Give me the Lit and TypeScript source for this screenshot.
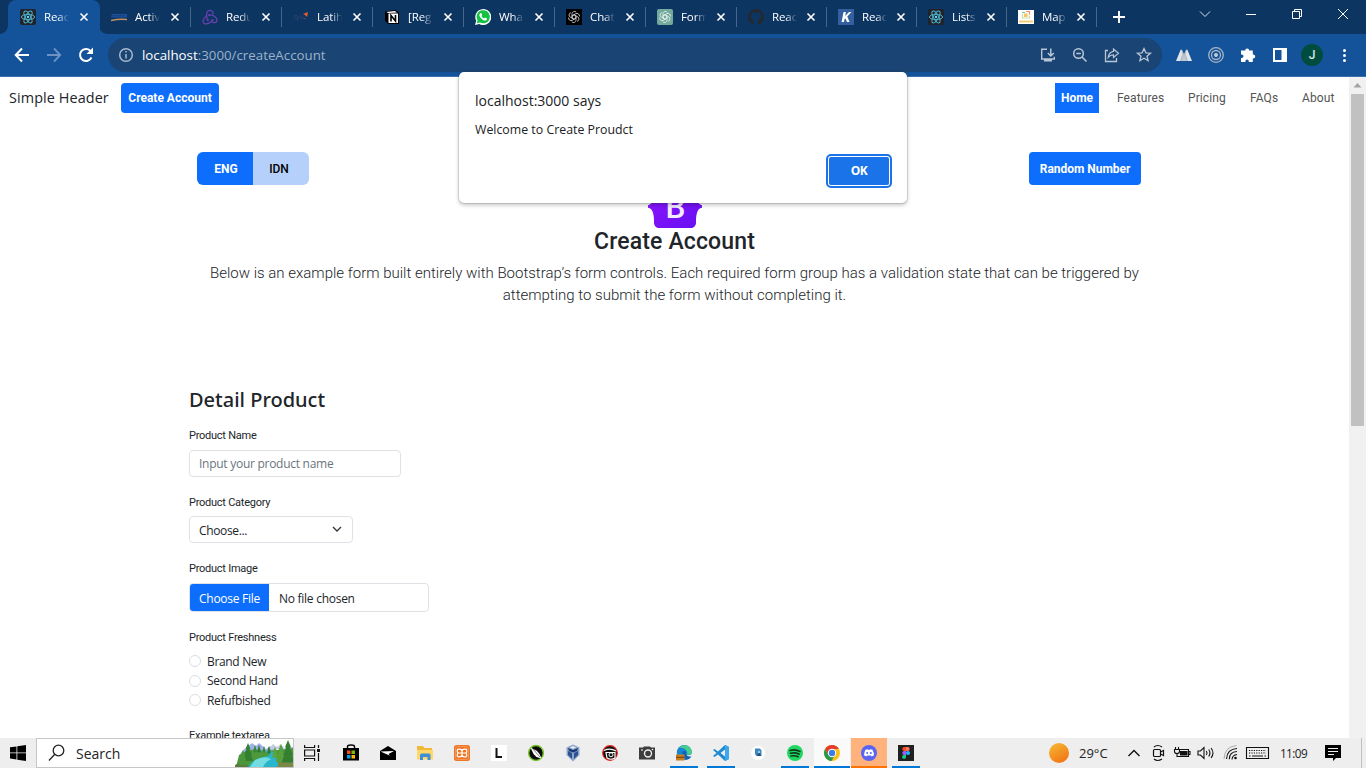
import { LitElement, html, svg, css } from "lit";
import { customElement, property } from "lit/decorators.js";
import { classMap } from "lit/directives/class-map.js";

const reactIcon = svg`<rect width="16" height="16" rx="2" fill="#20232a"/>
  <g fill="none" stroke="#4fb3cc" stroke-width="1"><ellipse cx="8" cy="8" rx="6.6" ry="2.6"/>
  <ellipse cx="8" cy="8" rx="6.6" ry="2.6" transform="rotate(60 8 8)"/><ellipse cx="8" cy="8" rx="6.6" ry="2.6" transform="rotate(120 8 8)"/></g>
  <circle cx="8" cy="8" r="1.2" fill="#61dafb"/>`;

const knot = (c: string) => svg`<g fill="none" stroke=${c} stroke-width=".8">
  ${[0, 60, 120, 180, 240, 300].map((a) => svg`<path d="M8 5.800L10 7V11.200a2.500 2.500 0 0 1-4.200 1.700" transform="rotate(${a} 8 8)"/>`)}</g>`;

const favicons: Record<string, unknown> = {
  react: reactIcon,
  activity: svg`<path d="M1 5h15v3.500H0z" fill="#1c4f9c"/><path d="M1 6.700h13" stroke="#0c3563" stroke-width=".8" stroke-dasharray="1.500 1"/><path d="M0 11.500q8-1.800 16-1" stroke="#c8925c" stroke-width="1.400" fill="none"/>`,
  redux: svg`<g fill="none" stroke="#6a3fb0" stroke-width="1.300"><path d="M5.200 9.500C3.500 5.500 5 1.300 8 1.300c2.300 0 3.400 2 3 4.200"/>
    <path d="M4 7.500C.8 9.500 0 13.500 2.500 14.600c2.700 1 6.500-1 7.700-3.600"/><path d="M7 6C9.500 5.200 15 7.800 15 11.300c0 2.500-3 3-5.500 1.200"/></g>
    <circle cx="5.600" cy="10.800" r="1.200" fill="#6a3fb0"/><circle cx="10.600" cy="11" r="1.100" fill="#6a3fb0"/><circle cx="7.200" cy="6.200" r="1.100" fill="#6a3fb0"/>`,
  latih: svg`<g fill="none" stroke="#28416b" stroke-width="1"><circle cx="3" cy="8" r="1.700"/><path d="M4.700 7v5M7 10V7.500q1-1.500 2 0V10"/></g><path d="M10 5l5-2-1 5-2-2z" fill="#e8602c"/><path d="M10.500 9l2 1" stroke="#7c4a57"/>`,
  notion: svg`<path d="M1 2.500L11.500 1 15 3.500V15H4.500L1 12z" fill="#000"/><path d="M2 3l9-1 2 1.400-8.500.6z" fill="#fff"/><rect x="4.500" y="4.500" width="9.500" height="9.500" fill="#fff"/><path d="M7 12.500V6.500l4.500 5.500V6" stroke="#000" stroke-width="1.600" fill="none"/>`,
  whatsapp: svg`<path d="M0 16l1.200-4.200A8 8 0 1 1 4.300 15z" fill="#fff"/><path d="M1.800 14.200l.8-3A6.600 6.600 0 1 1 5 13.500z" fill="#14c143"/><path d="M5.200 4.200l1-.2 1 2-.7 1c.7 1.400 1.400 2 2.600 2.500l.9-1 2 1c0 1.500-1 2.200-2.200 2.100C7 11.200 4 7.500 4.300 5.600z" fill="#fff"/>`,
  chat: svg`<rect width="16" height="16" fill="#000"/>${knot("#d5d5d5")}`,
  form: svg`<rect width="16" height="16" rx="2" fill="#74aa9c"/>${knot("#e6f3ef")}`,
  github: svg`<path d="M8 0a8 8 0 0 0-2.500 15.600c.4 0 .5-.2.500-.4v-1.600c-2.200.5-2.700-1-2.700-1-.4-.9-.9-1.200-.9-1.200-.7-.5 0-.5 0-.5.800.1 1.200.8 1.200.8.700 1.300 1.900.9 2.400.7 0-.5.300-.9.500-1.100-1.800-.2-3.600-.9-3.600-4 0-.8.300-1.600.8-2.100-.1-.2-.4-1 .1-2.100 0 0 .7-.2 2.200.8a7.600 7.600 0 0 1 4 0c1.500-1 2.200-.8 2.200-.8.400 1.100.2 1.900.1 2.100.5.500.8 1.300.8 2.100 0 3.100-1.900 3.700-3.700 3.900.3.300.6.800.6 1.500v2.500c0 .2.100.5.500.4A8 8 0 0 0 8 0z" fill="#24292f"/>`,
  k: svg`<rect width="16" height="16" fill="#34609f"/><path d="M5.500 3h2.400L7.200 7 11 3h2.500L9.300 7.400 11.500 13H9L7.400 9.200 6.500 10.200 6 13H3.600z" fill="#fff"/>`,
  map: svg`<rect y="1" width="16" height="14" fill="#fff"/><g fill="none" stroke-width="1.200"><path d="M4 3.500h3" stroke="#7bc8a0"/><path d="M8 2.500h3.500v3" stroke="#ee8d73"/><path d="M4.500 5v4h7V6.500" stroke="#c7dfa6"/></g><rect x="6" y="4.500" width="3.500" height="3.500" fill="#f7c660"/><path d="M1 12.500h14" stroke="#f3cd74" stroke-width="2"/>`,
};

const tabs = [
  ["react", "Reac"], ["activity", "Activ"], ["redux", "Redu"], ["latih", "Latih"],
  ["notion", "[Reg"], ["whatsapp", "Wha"], ["chat", "Chat"], ["form", "Form"],
  ["github", "Reac"], ["k", "Reac"], ["react", "Lists"], ["map", "Map"],
];

@customElement("chrome-tab")
class ChromeTab extends LitElement {
  @property() icon = "";
  @property() label = "";
  @property({ type: Boolean }) active = false;
  static styles = css`
    :host { display: block; height: 34px; color: #fff; }
    .tab { display: flex; align-items: center; height: 34px; box-sizing: border-box; padding-left: 11px; border-right: 1px solid transparent; position: relative; }
    .tab::after { content: ""; position: absolute; right: -1px; top: 7px; width: 1px; height: 20px; background: #48668a; }
    .tab.active { background: #14529a; border-radius: 8px 8px 0 0; margin-left: -1px; padding-left: 12px; }
    .tab.active::after { display: none; }
    .tab.active::before { content: ""; position: absolute; left: -8px; right: -8px; bottom: 0; height: 8px;
      background: radial-gradient(circle at 0 0, transparent 7.5px, #14529a 8px) left / 8px 8px no-repeat, radial-gradient(circle at 100% 0, transparent 7.5px, #14529a 8px) right / 8px 8px no-repeat; }
    .icon { flex: none; }
    .label { margin-left: 8px; width: 25px; flex: none; white-space: nowrap; font: 11.500px/18px "Open Sans", sans-serif; letter-spacing: -0.1px;
      -webkit-mask-image: linear-gradient(90deg, #000 55%, transparent); mask-image: linear-gradient(90deg, #000 55%, transparent); }
    .close { margin-left: 10px; flex: none; }
    :host(.narrow) .close { margin-left: 9px; }
  `;
  render() {
    return html`<div class=${classMap({ tab: true, active: this.active })}>
      <svg class="icon" width="16" height="16" viewBox="0 0 16 16">${favicons[this.icon]}</svg>
      <span class="label">${this.label}</span>
      <svg class="close" width="10" height="10" viewBox="0 0 10 10"><path d="M1.500 1.500l7 7M8.500 1.500l-7 7" stroke="#fff" stroke-width="1.600"/></svg>
    </div>`;
  }
}

const ico = (body: unknown) => html`<span class="cell"><svg width="20" height="20" viewBox="0 0 20 20" fill="none">${body}</svg></span>`;

@customElement("chrome-frame")
class ChromeFrame extends LitElement {
  static styles = css`
    :host { display: block; height: 77px; font-family: "Open Sans", sans-serif; }
    .strip { display: flex; height: 34px; background: #0d3562; padding-left: 9px; }
    .wide { width: 91px; }
    .narrow { width: 90px; }
    .plus { width: 44px; height: 34px; display: grid; place-items: center; }
    .win { display: flex; margin-left: auto; margin-top: -3px; }
    .win svg { width: 46px; height: 34px; }
    .bar { display: flex; align-items: center; height: 43px; box-sizing: border-box; background: #14529a; border-bottom: 1px solid #3a70b2; padding-left: 6px; }
    .cell { width: 32px; height: 34px; display: grid; place-items: center; flex: none; }
    .omni { margin: 0 6px; width: 1054px; height: 34px; border-radius: 17px; background: #194473; display: flex; align-items: center; box-sizing: border-box; padding: 0 2px; flex: none; }
    .url { font-size: 13.300px; color: #9db3ca; flex: 1; white-space: nowrap; }
    .host { color: #fff; }
    .avatar { width: 22px; height: 22px; border-radius: 50%; background: #004d40; color: #d9e5e2; font: 500 12px/22px Roboto, sans-serif; text-align: center; }
  `;
  render() {
    return html`
      <div class="strip">
        ${tabs.map(([i, l], n) => html`<chrome-tab class=${n < 8 ? "wide" : "narrow"} .icon=${i} .label=${l} .active=${n === 0}></chrome-tab>`)}
        <div class="plus"><svg width="12" height="12"><path d="M6 0v12M0 6h12" stroke="#fff" stroke-width="1.900"/></svg></div>
        <div class="win">
          <svg viewBox="0 0 46 34" fill="none" stroke="#d8e0ea"><path d="M18 14.500l5 5 5-5"/></svg>
          <svg viewBox="0 0 46 34" stroke="#fff"><path d="M18 17.500h10"/></svg>
          <svg viewBox="0 0 46 34" fill="none" stroke="#fff"><path d="M18.500 14.500h7v7h-7zM20.500 14.500v-2h7v7h-2"/></svg>
          <svg viewBox="0 0 46 34" stroke="#fff"><path d="M18 12l10 10M28 12l-10 10"/></svg>
        </div>
      </div>
      <div class="bar">
        ${ico(svg`<path d="M17 10H4M10 3.500L3.700 10l6.300 6.500" stroke="#fff" stroke-width="2"/>`)}
        ${ico(svg`<path d="M3 10h13M10 3.500l6.300 6.500-6.300 6.500" stroke="#6c93c2" stroke-width="1.800"/>`)}
        ${ico(svg`<path d="M15.500 12.500a6 6 0 1 1-1.200-6.800" stroke="#fff" stroke-width="2"/><path d="M17 2.500v6.500h-6.500z" fill="#fff"/>`)}
        <div class="omni">
          ${ico(svg`<circle cx="10" cy="10" r="6.300" stroke="#a9b9cb" stroke-width="1.500"/><path d="M10 9v4.500M10 6v1.600" stroke="#a9b9cb" stroke-width="1.500"/>`)}
          <span class="url"><span class="host">localhost</span>:3000/createAccount</span>
          ${ico(svg`<path d="M9 4.200H3.700V14h12.600v-2.300" stroke="#b9c6d5" stroke-width="1.400"/><path d="M6 14h8v2.500H6z" fill="#b9c6d5"/><path d="M12.800 3.500v7M9.800 8l3 3 3-3" stroke="#b9c6d5" stroke-width="1.500"/>`)}
          ${ico(svg`<circle cx="8.500" cy="8.500" r="4.800" stroke="#b9c6d5" stroke-width="1.500"/><path d="M12 12l4.500 4.500M6.300 8.500h4.500" stroke="#b9c6d5" stroke-width="1.500"/>`)}
          ${ico(svg`<path d="M6 5.500H3.500v11h11V13" stroke="#b9c6d5" stroke-width="1.300"/><path d="M11.500 4l5 4.200-5 4.200v-2.500c-2.500 0-4 .8-5.300 2.500.4-3 2-5.500 5.300-6z" stroke="#b9c6d5" stroke-width="1.200"/>`)}
          ${ico(svg`<path d="M10 3.600l1.900 4.200 4.600.4-3.500 3 1.100 4.500-4.100-2.400-4.100 2.400L7 11.200l-3.500-3 4.600-.4z" stroke="#b9c6d5" stroke-width="1.300"/>`)}
        </div>
        ${ico(svg`<path d="M2 16L6.500 5Q7.200 4 8 5L10 9.500 7 16z" fill="#e2e6ea"/><path d="M18 16L13.500 5Q12.800 4 12 5L10 9.500l3 6.500z" fill="#e2e6ea"/><path d="M7 16l3-8 3 8z" fill="#c2cad3"/><path d="M7.300 4.500L10 9.500 7.500 16H6l2.200-6.500zM12.700 4.500L10 9.500l2.500 6.500H14l-2.200-6.500z" fill="#b3bdc9"/>`)}
        ${ico(svg`<circle cx="10" cy="10" r="7.300" stroke="#aab7c6" stroke-width="1.300"/><circle cx="10" cy="10" r="4.500" stroke="#aab7c6" stroke-width="1.300"/><circle cx="10" cy="10" r="2" fill="#c3cdd8"/>`)}
        ${ico(svg`<path d="M3 5.500h4.200a2 2 0 1 1 4 0h3.600v4h.4a2 2 0 1 1 0 4h-.4v3.500h-4v-.7a1.700 1.700 0 0 0-3.400 0v.7H3v-4h.7a1.800 1.800 0 0 0 0-3.600H3z" fill="#fff"/>`)}
        ${ico(svg`<path d="M4 4h12v12H4z" stroke="#fff" stroke-width="2"/><path d="M11.500 3H17v14h-5.500z" fill="#fff"/>`)}
        <span class="cell"><span class="avatar">J</span></span>
        ${ico(svg`<g fill="#fff"><circle cx="10.500" cy="5.500" r="1.500"/><circle cx="10.500" cy="10.500" r="1.500"/><circle cx="10.500" cy="15.500" r="1.500"/></g>`)}
      </div>`;
  }
}

@customElement("account-page")
class AccountPage extends LitElement {
  static styles = css`
    :host { display: flex; height: 661px; background: #fff; color: #212529; overflow: hidden; font-family: "Open Sans", sans-serif; }
    .content { width: 1349px; height: 661px; }
    .header { display: flex; align-items: center; padding: 6px 9px 0; height: 30px; font: 12px/30px Roboto, sans-serif; color: #555; }
    .brand { font: 14.400px/30px "Open Sans", sans-serif; color: #212529; width: 112px; white-space: nowrap; letter-spacing: 0.1px; }
    .btn { background: #0d6efd; color: #fff; border-radius: 4px; text-align: center; font: 700 12px/30px Roboto, sans-serif; white-space: nowrap; }
    .create { width: 98px; }
    .nav { display: flex; margin-left: auto; padding-right: 5px; letter-spacing: 0.1px; }
    .home { background: #0d6efd; color: #fff; font-weight: 700; width: 44px; text-align: center; margin-right: 18px; letter-spacing: 0; }
    .features { width: 71px; }
    .pricing { width: 62px; }
    .faqs { width: 52px; }
    .about { width: 33px; }
    .tools { display: flex; justify-content: space-between; padding: 39px 208px 0 197px; height: 33px; }
    .lang { display: flex; font: 500 12px/34px Roboto, sans-serif; height: 33px; }
    .eng { width: 56px; padding-left: 2px; box-sizing: border-box; text-align: center; background: #0d6efd; color: #fff; border-radius: 6px 0 0 6px; font-weight: 700; }
    .idn { width: 56px; padding-right: 4px; box-sizing: border-box; text-align: center; background: #b6d0fc; color: #000; border-radius: 0 6px 6px 0; }
    .random { width: 112px; height: 33px; line-height: 34px; letter-spacing: -0.03px; }
    .intro { text-align: center; height: 203px; }
    .logo { display: block; margin: 0 auto; }
    .title { margin: 0; font: 500 23px/28px Roboto, sans-serif; letter-spacing: 0.15px; }
    .lead { margin: 6px auto 0; width: 960px; font: 300 15px/22px Roboto, sans-serif; letter-spacing: 0; }
    .form { padding-left: 189px; }
    .section { margin: 0 0 17px; font: 500 20px/24px "Noto Sans", sans-serif; }
    .label { font: 11px/14px Roboto, sans-serif; letter-spacing: -0.25px; white-space: nowrap; }
    .box { box-sizing: border-box; border: 1px solid #dee2e6; border-radius: 4px; font: 12px/25px "Open Sans", sans-serif; letter-spacing: -0.27px; background: #fff; color: #212529; }
    .name { display: block; width: 212px; height: 27px; padding: 0 9px; margin: 7px 0 19px; outline: none; }
    .name::placeholder { color: #6c757d; opacity: 1; }
    .select { display: flex; align-items: center; justify-content: space-between; width: 164px; height: 27px; padding: 2px 10px 0 9px; margin: 6px 0 19px; letter-spacing: -0.35px; }
    .chev { margin-top: -4px; }
    .file { display: flex; width: 240px; height: 29px; margin: 7px 0 19px; line-height: 29px; overflow: hidden; }
    .choose { background: #0d6efd; color: #fff; width: 79px; text-align: center; margin-right: 10px; }
    .radios { margin-top: 6.500px; height: 77.500px; }
    .radio { display: flex; align-items: center; height: 19.500px; font: 12px/19px "Open Sans", sans-serif; letter-spacing: -0.33px; }
    .dot { width: 12px; height: 12px; box-sizing: border-box; border: 1px solid #d9dde2; border-radius: 50%; margin-right: 6px; }
    .bar { width: 17px; background: #f1f1f1; display: flex; flex-direction: column; align-items: center; }
    .thumb { width: 13px; height: 332px; background: #c1c1c1; }
  `;
  render() {
    return html`
      <div class="content">
        <div class="header">
          <span class="brand">Simple Header</span><span class="btn create">Create Account</span>
          <nav class="nav"><span class="home">Home</span><span class="features">Features</span><span class="pricing">Pricing</span><span class="faqs">FAQs</span><span class="about">About</span></nav>
        </div>
        <div class="tools">
          <div class="lang"><span class="eng">ENG</span><span class="idn">IDN</span></div>
          <span class="btn random">Random Number</span>
        </div>
        <div class="intro">
          <svg class="logo" width="54" height="43" viewBox="0 0 118 94"><defs><linearGradient id="g" x1="0" y1="0" x2="1" y2="1"><stop stop-color="#9013fe"/><stop offset="1" stop-color="#6610f2"/></linearGradient></defs>
            <path fill="url(#g)" d="M24.509 0c-6.733 0-11.715 5.893-11.492 12.284.214 6.140-.064 14.092-2.066 20.577C8.943 39.365 5.547 43.485 0 44.014v5.972c5.547.529 8.943 4.649 10.951 11.153 2.002 6.485 2.280 14.437 2.066 20.577C12.794 88.106 17.776 94 24.510 94H93.500c6.733 0 11.714-5.893 11.491-12.284-.214-6.140.064-14.092 2.066-20.577 2.009-6.504 5.396-10.624 10.943-11.153v-5.972c-5.547-.529-8.934-4.649-10.943-11.153-2.002-6.484-2.280-14.437-2.066-20.577C105.214 5.894 100.233 0 93.500 0z"/>
            <text x="60" y="72" text-anchor="middle" font-family="Roboto" font-weight="500" font-size="69" fill="#f4ecff">B</text></svg>
          <h1 class="title">Create Account</h1>
          <p class="lead">Below is an example form built entirely with Bootstrap’s form controls. Each required form group has a validation state that can be triggered by attempting to submit the form without completing it.</p>
        </div>
        <div class="form">
          <h2 class="section">Detail Product</h2>
          <div class="label">Product Name</div>
          <input class="box name" placeholder="Input your product name" />
          <div class="label">Product Category</div>
          <div class="box select"><span>Choose...</span><svg class="chev" width="10" height="8" viewBox="0 0 10 8"><path d="M1 2l4 4 4-4" fill="none" stroke="#343a40" stroke-width="1.400"/></svg></div>
          <div class="label">Product Image</div>
          <div class="box file"><span class="choose">Choose File</span><span>No file chosen</span></div>
          <div class="label">Product Freshness</div>
          <div class="radios">${["Brand New", "Second Hand", "Refufbished"].map((t) => html`<div class="radio"><span class="dot"></span>${t}</div>`)}</div>
          <div class="label">Example textarea</div>
        </div>
      </div>
      <div class="bar"><svg width="17" height="17"><path d="M4.500 10.500h8L8.500 6z" fill="#a3a3a3"/></svg><div class="thumb"></div></div>`;
  }
}

@customElement("alert-dialog")
class AlertDialog extends LitElement {
  static styles = css`
    :host { display: flex; flex-direction: column; box-sizing: border-box; width: 448px; height: 131px; padding: 19px 16px 0; background: #fff; border-radius: 5px; box-shadow: 0 0 0 1px rgba(60, 64, 67, 0.14), 0 2px 4px rgba(0, 0, 0, 0.25); color: #202124; font-family: "Open Sans", sans-serif; }
    .origin { font-size: 14px; line-height: 20px; }
    .message { font-size: 12.350px; line-height: 18px; margin-top: 10px; }
    .ok { align-self: flex-end; margin-top: 17px; width: 60px; height: 28px; border-radius: 3px; background: #1a73e8; color: #fff; font: 700 12px/28px "Open Sans", sans-serif; letter-spacing: -0.4px; text-align: center; border: 1px solid #fff; outline: 2px solid #1a73e8; margin-right: 1px; }
  `;
  render() {
    return html`<div class="origin">localhost:3000 says</div><div class="message">Welcome to Create Proudct</div><div class="ok">OK</div>`;
  }
}

const tree = (x: number, y: number, s: number, c: string) => svg`<path d="M${x} ${y}l${2.5 * s} ${6 * s}h-${1 * s}l${2.5 * s} ${6 * s}h-${1 * s}l${2 * s} ${6 * s}h-${10 * s}l${2 * s}-${6 * s}h-${1 * s}l${2.5 * s}-${6 * s}h-${1 * s}z" fill=${c}/>`;

const apps: { s: string; b: unknown }[] = [
  { s: "", b: svg`<path d="M2 5h16v12.500H2z" fill="#000"/><path d="M6.500 6V3.500q0-1.500 3.500-1.500t3.500 1.500V6" fill="none" stroke="#000" stroke-width="1.400"/><path d="M6 7.500h3.500v3.500H6z" fill="#f25022"/><path d="M10.500 7.500H14v3.500h-3.500z" fill="#7fba00"/><path d="M6 12h3.500v3.500H6z" fill="#00a4ef"/><path d="M10.500 12H14v3.500h-3.500z" fill="#ffb900"/>` },
  { s: "", b: svg`<path d="M2 8l8-5 8 5v9H2z" fill="#000"/><path d="M2.500 8.500l13.500-.5-5.500 3 1.500 1.800z" fill="#fff"/>` },
  { s: "", b: svg`<path d="M2 3h6l1.500 2H17v11H2z" fill="#f0b93a"/><path d="M2 7h16v9.500H2z" fill="#ffd768"/><path d="M5 17v-5q0-1.500 1.500-1.500h7.500q1.500 0 1.500 1.500v5h-3v-3H8v3z" fill="#3d8fd8"/>` },
  { s: "", b: svg`<rect x="2" y="2" width="16" height="16" rx="2.500" fill="#ee7526"/><rect x="3.500" y="3.500" width="13" height="13" rx="2" fill="none" stroke="#f9a566" stroke-width=".7"/><path d="M6 6.200h1.500q2.500 0 2.500 2.300v3q0 2.300 2.500 2.300H14q.8 0 .8-1.800T13.300 10H6.700Q5.200 10 5.200 8.200T6 6.200zM14 6.200h-1.500Q10 6.200 10 8.500v3q0 2.300-2.500 2.300H6q-.8 0-.8-1.800T6.700 10h6.600q1.500 0 1.500-1.800T14 6.200z" fill="none" stroke="#fff" stroke-width="1.200"/>` },
  { s: "", b: svg`<path d="M2 2h16v16H2z" fill="#fff"/><path d="M7.500 5v9h5.500" fill="none" stroke="#111" stroke-width="2"/>` },
  { s: "", b: svg`<circle cx="10" cy="10" r="7.400" fill="#0a0a0a" stroke="#79c52e" stroke-width="1.500"/><path d="M4.500 4.500l6.500 3.500 2.500 3 2 4.500-5-1.500-3-3z" fill="#fff"/><path d="M6.500 5.500l7.500 8.500" stroke="#333" stroke-width=".6"/>` },
  { s: "", b: svg`<path d="M10 1.500l6.500 3v7.500L10 18.500 3.500 12V4.500z" fill="#8fa5c8"/><path d="M5 5l5 2 5-2-1 3-4 1.500L6 8z" fill="#163a75"/><path d="M5 8l4 2v6l-4-4zM15 8l-4 2v6l4-4z" fill="#2b5394"/><path d="M7 4.500l3-1.500 3 1.500-3 1.300z" fill="#e7eef8"/>` },
  { s: "", b: svg`<circle cx="10" cy="10" r="7.300" fill="#111" stroke="#e2231a" stroke-width="1.200"/><path d="M4 7.500q6-3 12 .5M6 9.500h9v5.500q-4 2.500-8 0z" fill="none" stroke="#fff" stroke-width="1.200"/><circle cx="11" cy="11.800" r="2" fill="none" stroke="#fff"/>` },
  { s: "", b: svg`<path d="M2 4.500h4l1-1h6l1 1h4v12H2z" fill="#3d3d3d"/><circle cx="11" cy="10.500" r="3.500" fill="#3d3d3d" stroke="#eee" stroke-width="1.400"/><path d="M4 7h2" stroke="#fff"/><circle cx="15.500" cy="6.500" r=".8" fill="#fff"/>` },
  { s: "run", b: svg`<circle cx="10.300" cy="9.500" r="7.500" fill="#1785d6"/><path d="M5 4.500Q9 1 13.500 2.700 18 5 17.800 10q-.8 2.500-4.800 1.500 1-4-3-6Q7.500 4.500 5 4.500z" fill="#45cf8a"/><path d="M12 11.500q3.500 1.500 6-.5v3l-5 1z" fill="#eee"/><path d="M8 9q3-2 4 0 0 3 1 3.500 2 1.500 4.500.7-2 3.500-6 3.500z" fill="#0f62b5"/><path d="M2 11.500h8.500V17.500H2z" fill="#c77d22"/><path d="M2 14.300h8.500" stroke="#6d3b0d"/>` },
  { s: "run", b: svg`<path d="M14 2l4 2v12l-4 2-7-6.500L3.500 14 2 13l3.500-3L2 7l1.500-1L7 8.500zM14 6.500L9.500 10l4.500 3.500z" fill="#1f8ad2"/><path d="M14 2l4 2v12l-4 2z" fill="#3aa8ee"/>` },
  { s: "", b: svg`<circle cx="10" cy="10" r="7" fill="#fff"/><path d="M7 5.500h5l1.500 2V13H8.500L7 11z" fill="#3f86bd"/><path d="M9 13l2-5 2 5z" fill="#244f78"/><circle cx="11" cy="9" r="1.200" fill="#8fd0e5"/>` },
  { s: "run", b: svg`<circle cx="10" cy="10" r="8" fill="#1ed760"/><path d="M5 7.500q5.500-1.600 10 1M5.500 10.300q4.800-1.200 8.700.9M6 13q4-.9 7.200.7" fill="none" stroke="#10381e" stroke-width="1.600" stroke-linecap="round"/>` },
  { s: "wide", b: svg`<circle cx="10" cy="10" r="8" fill="#fbc116"/><path d="M3.100 6A8 8 0 0 1 16.900 6H10l-3.500 6z" fill="#e33b2e"/><path d="M3.100 6A8 8 0 0 0 9.500 18l3.500-6-6.500 0z" fill="#279847"/><circle cx="10" cy="10" r="4.200" fill="#fff"/><circle cx="10" cy="10" r="3.200" fill="#3d7de8"/>` },
  { s: "wide orange", b: svg`<circle cx="10" cy="10" r="8" fill="#5865f2"/><path d="M6.500 6.700l2-.5.500.6h2l.5-.6 2 .5q1.500 3 1.500 5.600l-2.300 1.200-.8-1.100H8.100l-.8 1.100L5 12.300q0-3 1.500-5.600z" fill="#fff"/><circle cx="8.200" cy="10" r="1" fill="#5865f2"/><circle cx="11.800" cy="10" r="1" fill="#5865f2"/>` },
  { s: "run", b: svg`<path d="M2 2h16v16H2z" fill="#202020"/><path d="M10 4H8.300a2 2 0 0 0 0 4H10z" fill="#f24e1e"/><path d="M10 4h1.700a2 2 0 0 1 0 4H10z" fill="#ff7262"/><path d="M10 8H8.300a2 2 0 0 0 0 4H10z" fill="#a259ff"/><circle cx="12" cy="10" r="2" fill="#1abcfe"/><path d="M10 12H8.300A2 2 0 1 0 10 14z" fill="#0acf83"/>` },
];

@customElement("task-bar")
class TaskBar extends LitElement {
  static styles = css`
    :host { display: flex; height: 30px; background: #eeeeee; color: #222; font-family: "Open Sans", sans-serif; position: relative; }
    .start { width: 36px; display: grid; place-items: center; }
    .search { width: 258px; height: 30px; box-sizing: border-box; border: 1px solid #c6c6c6; background: #fff; display: flex; align-items: center; padding-left: 11px; font-size: 14px; }
    .search span { margin-left: 11px; flex: 1; }
    .tv { width: 39px; height: 30px; padding-left: 9px; box-sizing: border-box; display: flex; align-items: center; }
    .app { width: 36px; margin-right: 1px; height: 30px; display: flex; flex-direction: column; align-items: center; justify-content: space-between; padding-top: 5px; box-sizing: border-box; }
    .line { width: 28px; height: 2px; }
    .run .line { background: #0078d7; }
    .wide { background: #fafafa; }
    .wide .line { width: 36px; background: #0078d7; }
    .orange { background: #ffb27c; }
    .orange .line { background: #ff7300; }
    .tray { margin-left: auto; display: flex; align-items: center; }
    .sun { width: 20px; height: 20px; border-radius: 50%; background: linear-gradient(150deg, #f5bd35, #f26a10); margin-right: 10px; }
    .temp { font-size: 13px; width: 43px; }
    .t { width: 24px; height: 20px; }
    .kb { width: 31px; }
    .time { width: 41px; text-align: center; font-size: 11.800px; line-height: 18px; padding-bottom: 1px; letter-spacing: -0.6px; }
    .note { width: 38px; height: 20px; }
    .edge { width: 1px; height: 30px; margin: 0 4px 0 9px; background: #c0c0c0; }
  `;
  render() {
    const k = "#111";
    return html`
      <span class="start"><svg width="16" height="16" fill="#000"><path d="M0 2.300l6.500-.9v6.100H0zM7.300 1.300L16 0v7.500H7.300zM0 8.300h6.500v6.100L0 13.500zM7.300 8.300H16V16l-8.700-1.300z"/></svg></span>
      <div class="search"><svg width="17" height="18" fill="none" stroke="#222" stroke-width="1.300"><circle cx="10.500" cy="6.500" r="5.300"/><path d="M6.800 10.300L1 16.500"/></svg><span>Search</span>
        <svg width="58" height="28" viewBox="0 0 58 28"><path d="M7 12L17 4l4 3 3-3 7 6 5-3 6 4 16-3v12H4z" fill="#9db1ea"/><path d="M34 10l4-5 4 3 4-3 4 5z" fill="#c3cbe0"/><path d="M4 16q10-7 20-5t34-2v19H1z" fill="#4c9a3d"/><path d="M24 12q16 2 9 5-16 3-20 11h30q6-7-4-10 5-4-5-6z" fill="#27b6cd"/><path d="M20 21q10-5 16-1-6 3-8 8H15z" fill="#72dce0"/><path d="M40 20q10 0 18 3v5H42q3-5-2-8z" fill="#7a8a45"/><path d="M0 26l8-4 6 6H0z" fill="#5b7b3b"/>
          ${tree(20, 6, 0.4, "#3a8636")}${tree(24, 6, 0.4, "#2f7a2d")}${tree(29, 7, 0.35, "#3a8636")}${tree(34, 7, 0.4, "#2f7a2d")}${tree(13, 4, 1, "#347f31")}${tree(8, 11, 0.85, "#4a9638")}${tree(40, 8, 0.6, "#5da43d")}${tree(46, 5, 1, "#57a03b")}${tree(53, 1, 1.250, "#357f31")}</svg></div>
      <span class="tv"><svg width="18" height="16" fill="none" stroke="#111" stroke-width="1.200"><path d="M1.600 0v2.500h10V0M1.600 5h10v6h-10zM1.600 16v-2.500h10V16M15.500 0v3M15.500 8v8"/><path d="M14 4h3v3h-3z" fill="#111" stroke="none"/></svg></span>
      ${apps.map((a) => html`<span class="app ${a.s}"><svg width="20" height="20" viewBox="0 0 20 20">${a.b}</svg><span class="line"></span></span>`)}
      <div class="tray">
        <span class="sun"></span><span class="temp">29°C</span>
        <svg class="t" viewBox="0 0 24 20" fill="none" stroke=${k} stroke-width="1.400"><path d="M6.500 13l5.500-5.500 5.500 5.500"/></svg>
        <svg class="t" viewBox="0 0 24 20" fill="none" stroke=${k} stroke-width="1.200"><rect x="7.500" y="6.500" width="7" height="7" rx="1"/><path d="M14.500 9l3-1.500v5l-3-1.500M8 4q3.500-3 8 0M8 16q3.500 3 8 0"/></svg>
        <svg class="t" viewBox="0 0 24 20" fill="none" stroke=${k} stroke-width="1.100"><path d="M9 6.500h9.500v7H8M18.500 8.500h1.500v3h-1.500"/><path d="M10.500 8.500h6.500v3.500h-6.500z" fill=${k}/><path d="M5.500 4v3M8.500 4v3M4.500 6.500h5v2q0 2-2.500 2t-2.500-2zM7 10.500v3h2"/></svg>
        <svg class="t" viewBox="0 0 24 20" fill="none" stroke=${k} stroke-width="1.100"><path d="M4 8h2.500L10 4.500v11L6.500 12H4zM12.300 8q1.500 2 0 4M14.700 6.500q2.500 3.500 0 7M17 5q4 5 0 10"/></svg>
        <svg class="t" viewBox="0 0 24 20" fill="none" stroke=${k} stroke-width="1.100"><path d="M8.500 16Q9 6 19 5.500M11.300 16.300q0-7.500 7.700-7.800M14 16.500q.3-4.500 5-5" /><path d="M6 16Q6.500 3.500 18.500 2.500" stroke="#999" stroke-width=".8"/><circle cx="17.500" cy="15" r="1.300" fill=${k} stroke="none"/></svg>
        <svg class="kb" height="20" viewBox="0 0 31 20" fill="none" stroke=${k} stroke-width="1.100"><path d="M4.500 4.500h22v11h-22z"/><path d="M7 7.500h17M7 10h17" stroke-dasharray="1.200 1.200"/><path d="M7 13h1.500M10 13h11M22.500 13H24"/></svg>
        <span class="time">11:09</span>
        <svg class="note" viewBox="0 0 38 20"><path d="M11 2h16v13h-5l-3 3v-3h-8z" fill="#000"/><path d="M14 5.500h10M14 8.500h10M14 11.500h6" stroke="#eee" stroke-width="1.200"/></svg>
        <span class="edge"></span>
      </div>`;
  }
}

@customElement("app-root")
class AppRoot extends LitElement {
  static styles = css`
    :host { display: block; width: 1366px; height: 768px; overflow: hidden; position: relative; }
    .alert { position: absolute; left: 459px; top: 72px; }
  `;
  render() {
    return html`<chrome-frame></chrome-frame><account-page></account-page><task-bar></task-bar><alert-dialog class="alert"></alert-dialog>`;
  }
}
